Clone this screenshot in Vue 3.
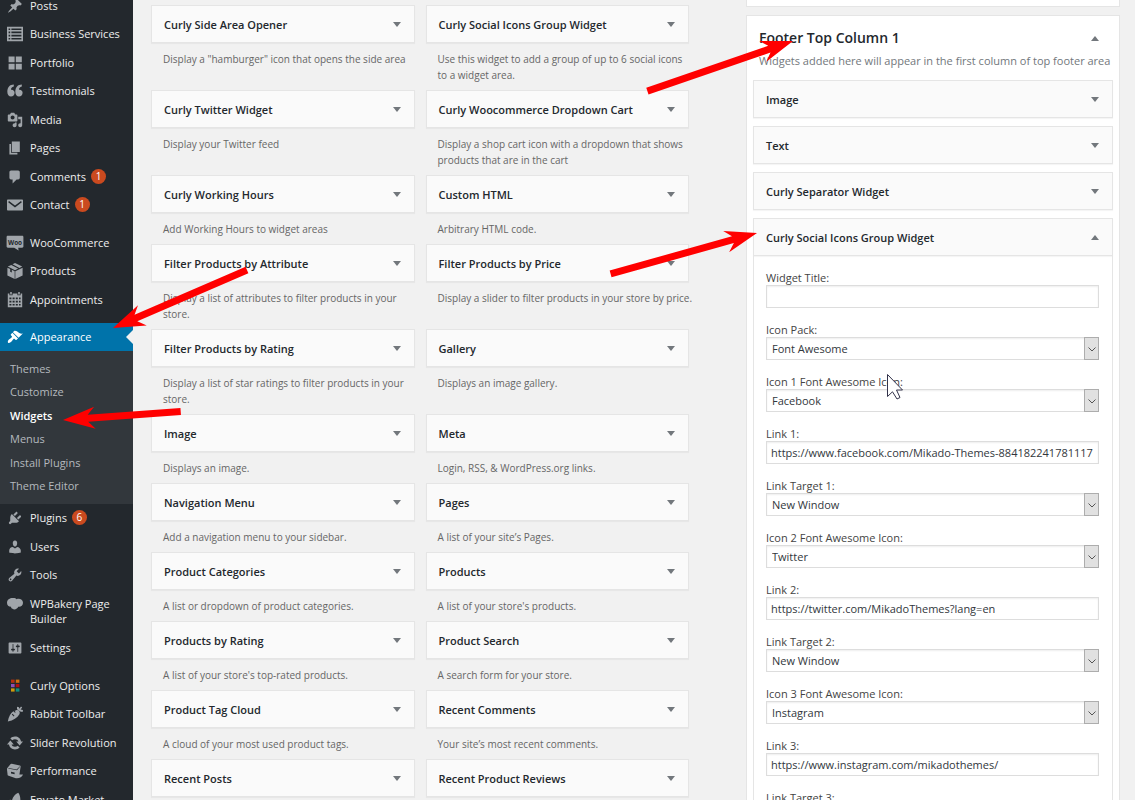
<template>
  <div class="admin-page">
    <nav class="admin-menu" aria-label="Admin menu">
      <ul v-for="(group, gi) in menu" :key="gi" class="menu-group">
        <li v-for="item in group" :key="item.label">
          <a href="#" class="menu-link" :class="{ active: item.active, tall: item.tall }">
            <svg class="menu-icon" viewBox="0 0 20 20" aria-hidden="true">
              <path v-for="(p, i) in icons[item.icon]" :key="i" :d="p.d || p" :fill="p.fill || 'currentColor'" fill-rule="evenodd" />
              <text v-if="item.icon === 'woo'" class="woo-text" x="10" y="12" text-anchor="middle">Woo</text>
            </svg>
            <span class="menu-name">{{ item.label }}</span>
            <span v-if="item.count" class="badge">{{ item.count }}</span>
          </a>
          <ul v-if="item.children" class="submenu">
            <li v-for="child in item.children" :key="child">
              <a href="#" :class="{ current: child === 'Widgets' }">{{ child }}</a>
            </li>
          </ul>
        </li>
      </ul>
    </nav>

    <main class="content">
      <section class="available">
        <article v-for="w in widgets" :key="w.title">
          <button type="button" class="widget-top">
            <span>{{ w.title }}</span>
            <i class="caret"></i>
          </button>
          <p class="widget-desc">{{ w.desc }}</p>
        </article>
      </section>

      <section class="sidebars">
        <div class="sidebar-box previous"></div>
        <div class="sidebar-box">
          <header class="sidebar-head">
            <h2>Footer Top Column 1</h2>
            <button type="button" class="toggle" aria-label="Toggle sidebar"><i class="caret up"></i></button>
          </header>
          <p class="sidebar-desc">Widgets added here will appear in the first column of top footer area</p>

          <div class="placed">
            <button v-for="name in placed" :key="name" type="button" class="widget-top">
              <span>{{ name }}</span>
              <i class="caret"></i>
            </button>

            <div class="open-widget">
              <button type="button" class="widget-top">
                <span>Curly Social Icons Group Widget</span>
                <i class="caret up"></i>
              </button>
              <form class="widget-form" @submit.prevent>
                <div v-for="(f, i) in fields" :key="f.label" class="field">
                  <label :for="'field-' + i">{{ f.label }}</label>
                  <div v-if="f.type === 'select'" class="select-wrap">
                    <select :id="'field-' + i" v-model="f.value">
                      <option>{{ f.value }}</option>
                    </select>
                    <span class="select-arrow">
                      <svg viewBox="0 0 10 10" aria-hidden="true"><path d="M1.5 3.5 5 7l3.5-3.5" /></svg>
                    </span>
                  </div>
                  <input v-else :id="'field-' + i" v-model="f.value" type="text">
                </div>
              </form>
            </div>
          </div>
        </div>
      </section>
    </main>

    <!-- tutorial arrows and mouse pointer over the page -->
    <svg class="annotations" width="1135" height="800" viewBox="0 0 1135 800" aria-hidden="true">
      <path
        v-for="(a, i) in arrows"
        :key="i"
        :d="arrowPath(a.length)"
        :transform="`translate(${a.x} ${a.y}) rotate(${a.angle})`"
        fill="#ff0000"
      />
      <path class="pointer" d="M887.5 374.5v22l5-4.700 4.500 7.200 3-1.500-3.500-7.500h6z" />
    </svg>
  </div>
</template>

<script setup>
import { ref } from 'vue';

const menu = [
  [
    { label: 'Posts', icon: 'post' },
    { label: 'Business Services', icon: 'list' },
    { label: 'Portfolio', icon: 'grid' },
    { label: 'Testimonials', icon: 'quote' },
    { label: 'Media', icon: 'media' },
    { label: 'Pages', icon: 'page' },
    { label: 'Comments', icon: 'comment', count: 1 },
    { label: 'Contact', icon: 'mail', count: 1 },
  ],
  [
    { label: 'WooCommerce', icon: 'woo' },
    { label: 'Products', icon: 'box' },
    { label: 'Appointments', icon: 'calendar' },
  ],
  [
    {
      label: 'Appearance',
      icon: 'brush',
      active: true,
      children: ['Themes', 'Customize', 'Widgets', 'Menus', 'Install Plugins', 'Theme Editor'],
    },
    { label: 'Plugins', icon: 'plug', count: 6 },
    { label: 'Users', icon: 'user' },
    { label: 'Tools', icon: 'wrench' },
    { label: 'WPBakery Page Builder', icon: 'bakery', tall: true },
    { label: 'Settings', icon: 'sliders' },
  ],
  [
    { label: 'Curly Options', icon: 'squares' },
    { label: 'Rabbit Toolbar', icon: 'carrot' },
    { label: 'Slider Revolution', icon: 'refresh' },
    { label: 'Performance', icon: 'cube' },
    { label: 'Envato Market', icon: 'leaf' },
  ],
];

const icons = {
  post: ['M10.44 3.02l1.82-1.82 6.36 6.35-1.83 1.82c-1.05-.68-2.48-.57-3.41.36l-.75.75c-.92.93-1.04 2.35-.35 3.41l-1.83 1.82-2.41-2.41-2.8 2.79c-.42.42-3.38 2.71-3.8 2.29s1.86-3.39 2.28-3.81l2.79-2.79L4.1 9.36l1.83-1.82c1.05.69 2.48.57 3.4-.36l.75-.75c.93-.92 1.05-2.35.36-3.41z'],
  list: ['M0 1h20v18H0zM2 3v2h2V3zM5.500 3v2H18V3zM2 7v2h2V7zM5.500 7v2H18V7zM2 11v2h2v-2zM5.500 11v2H18v-2zM2 15v2h2v-2zM5.500 15v2H18v-2z'],
  grid: ['M2 2h7.500v7H2zM11 2h7.500v7H11zM2 11h7.500v7H2zM11 11h7.500v7H11z'],
  quote: ['M8.500 2v2.500C6 5 5 6.500 5 8.500c2.500-.5 4.500 1.300 4.500 3.800S7.600 17 5 17s-4.600-2-4.600-6C.4 5.500 3.500 2 8.500 2zM18.500 2v2.500C16 5 15 6.500 15 8.500c2.500-.5 4.500 1.300 4.500 3.800S17.600 17 15 17s-4.600-2-4.600-6c0-5.500 3.100-9 8.100-9z'],
  media: ['M13 11V4c0-.55-.45-1-1-1h-1.670L9 1H5L3.670 3H2c-.55 0-1 .45-1 1v7c0 .55.45 1 1 1h10c.55 0 1-.45 1-1zM7 4.500c1.380 0 2.500 1.120 2.500 2.500S8.380 9.500 7 9.500 4.500 8.380 4.500 7 5.620 4.500 7 4.500zM14 6h5v10.500c0 1.380-1.120 2.500-2.500 2.500S14 17.880 14 16.500s1.120-2.500 2.500-2.500c.17 0 .34.02.5.05V9h-3V6zm-4 8.050V13h2v3.500c0 1.380-1.120 2.500-2.500 2.500S7 17.880 7 16.500 8.120 14 9.500 14c.17 0 .34.02.5.05z'],
  page: ['M6 15V2h10v13H6zm-1 1h8v2H3V5h2v11z'],
  comment: ['M5 2h9c1.100 0 2 .9 2 2v7c0 1.100-.9 2-2 2h-2l-5 5v-5H5c-1.100 0-2-.9-2-2V4c0-1.100.9-2 2-2z'],
  mail: ['M1 3h18c.6 0 1 .4 1 1v12c0 .6-.4 1-1 1H1c-.6 0-1-.4-1-1V4c0-.6.4-1 1-1zm1.500 2L1.500 6.500 10 13l8.500-6.500-1-1.500L10 10.600z'],
  woo: ['M1 1h18c.8 0 1.500.7 1.500 1.500v12c0 .8-.7 1.500-1.500 1.500h-5l.5 3.500L9 16H1c-.8 0-1.500-.7-1.500-1.500v-12C-.5 1.700.2 1 1 1z'],
  box: ['M10 0l9 4.500-3.500 1.700-8.600-4.500zM5.300 2.500l8.600 4.500L10 9 1 4.500zM.5 5.800L4 7.500v3.500l2 1V8.500L9.600 10.200V20L.5 15.500zM19.500 5.800V15.500L10.400 20V10.200z'],
  calendar: ['M4 0h2v3H4zM14 0h2v3h-2zM1 2h2v2h4V2h6v2h4V2h2v17H1zM3 7v2h2.500V7zM7 7v2h2.500V7zM11 7v2h2.500V7zM15 7v2h2V7zM3 11v2h2.500v-2zM7 11v2h2.500v-2zM11 11v2h2.500v-2zM15 11v2h2v-2zM3 15v2h2.500v-2zM7 15v2h2.500v-2zM11 15v2h2.500v-2zM15 15v2h2v-2z'],
  brush: ['M14.480 11.060L7.410 3.990l1.500-1.500c.5-.56 2.300-.47 3.510.32 1.210.8 1.430 1.280 2.910 2.100 1.180.64 2.450 1.260 4.450.85zm-.71.71L6.700 4.700 4.930 6.470c-.39.39-.39 1.020 0 1.410l1.060 1.060c.39.39.39 1.030 0 1.420-.6.6-1.430 1.110-2.210 1.690-.35.26-.7.53-1.010.84C1.430 14.230.4 16.080 1.400 17.070c.99 1 2.840-.03 4.180-1.360.31-.31.58-.66.85-1.020.57-.78 1.080-1.610 1.690-2.210.39-.39 1.020-.39 1.410 0l1.060 1.060c.39.39 1.020.39 1.410 0z'],
  plug: ['M13.110 4.360L9.870 7.600 8 5.730l3.240-3.240c.35-.34 1.050-.2 1.560.32.52.51.66 1.210.31 1.550zm-8 1.770l.91-1.120 9.010 9.010-1.190.84c-.71.71-2.630 1.160-3.820 1.160H6.140L4.900 17.260c-.59.59-1.540.59-2.120 0-.59-.58-.59-1.530 0-2.120l1.240-1.240v-3.880c0-1.130.4-3.190 1.090-3.890zm7.260 3.970l3.240-3.240c.34-.35 1.040-.21 1.550.31.52.51.66 1.210.31 1.550l-3.240 3.250z'],
  user: ['M10 9.250c-2.270 0-2.730-3.440-2.730-3.440C7 4.020 7.820 2 9.970 2c2.160 0 2.980 2.020 2.710 3.810 0 0-.41 3.440-2.680 3.440zm0 2.570L12.720 10c2.390 0 4.520 2.330 4.520 4.530v2.490s-3.650 1.130-7.240 1.130c-3.650 0-7.240-1.130-7.240-1.130v-2.490c0-2.250 1.940-4.480 4.470-4.480z'],
  wrench: ['M16.680 9.770c-1.340 1.340-3.300 1.670-4.950.99l-5.410 6.520c-.99.99-2.590.99-3.580 0s-.99-2.590 0-3.570l6.520-5.420c-.68-1.650-.35-3.610.99-4.950 1.280-1.280 3.120-1.620 4.720-1.060l-2.890 2.890 2.820 2.820 2.860-2.870c.53 1.580.18 3.390-1.080 4.650zM3.810 16.210c.4.39 1.040.39 1.430 0 .4-.4.4-1.040 0-1.430-.39-.4-1.030-.4-1.430 0-.39.39-.39 1.030 0 1.430z'],
  bakery: ['M7 2.500c2-.4 4 .3 5 1.500 3-1.500 8 0 8 4.500 0 4-3 5.500-6 5-.5 2.500-5 4.500-7 2.500-1.500-.5-2-1.500-2-2.500C2 13.500 0 11.500 0 8.500c0-4 3.500-6 7-6z'],
  sliders: ['M18 16V4c0-.55-.45-1-1-1H3c-.55 0-1 .45-1 1v12c0 .55.45 1 1 1h14c.55 0 1-.45 1-1zM8 11h1c.55 0 1 .45 1 1s-.45 1-1 1H8v1.500c0 .28-.22.5-.5.5s-.5-.22-.5-.5V13H6c-.55 0-1-.45-1-1s.45-1 1-1h1V5.500c0-.28.22-.5.5-.5s.5.22.5.5V11zm5-2h-1c-.55 0-1-.45-1-1s.45-1 1-1h1V5.500c0-.28.22-.5.5-.5s.5.22.5.5V7h1c.55 0 1 .45 1 1s-.45 1-1 1h-1v5.500c0 .28-.22.5-.5.5s-.5-.22-.5-.5V9z'],
  squares: [
    { d: 'M5 2h4.500v4H5z', fill: '#b5300f' },
    { d: 'M11 2h4.500v4H11z', fill: '#d2700c' },
    { d: 'M5 7.500h4.500v4H5z', fill: '#8e4fb5' },
    { d: 'M11 7.500h4.500v4H11z', fill: '#b01010' },
    { d: 'M5 13h4.500v4H5z', fill: '#cf9a0b' },
    { d: 'M11 13h4.500v4H11z', fill: '#118f80' },
  ],
  carrot: ['M11 5.500c1.500-.8 3-.5 4 .7 1 1 1.300 2.500.5 4C13 14.500 8 18 1 19.500 2 13 5 8.500 8 6.500l2 2 .8-.8-1.300-1.700zM12.500 4V1l2.500.5.5 2L17.500.5 19 2l-2 2.500 3 .5-.5 2.500L16.500 7zM6 10.500l2.500 2.500.8-.8L7 9.700z'],
  refresh: ['M10 2c4 0 7 2.600 7.500 6H20l-4.200 5-4.300-5h2.800c-.6-1.700-2.300-2.800-4.300-2.800-1.300 0-2.500.5-3.400 1.300L4.200 4.400C5.700 2.900 7.700 2 10 2zM10 18c-4 0-7-2.600-7.500-6H0l4.200-5 4.300 5H5.700c.6 1.700 2.300 2.800 4.300 2.800 1.300 0 2.500-.5 3.400-1.300l2.400 2.100C14.300 17.100 12.300 18 10 18z'],
  cube: ['M6 1l10 2c1 .2 1.300 1 1 2l-1.500 9.500c1.200-.3 2.500 0 4.500 0-1 3.500-5 5-9 4.500L2 16c-1-.3-1.500-1-1.300-2L0 8.500C0 7 0 6.500 1 5.500L4 2c.6-.8 1-1.100 2-1zM1.500 7l11 2 4-4.500-.3-.4L12 8 2 6.200zM5 11v2l4.500 1v-2z'],
  leaf: ['M14 1c3 3 4 12 .5 16C12 20 6 20 3.500 16.500 2 14 2.500 11 4 9c.5 2 1 3 2 4 0-5 3-10 8-12z'],
};

const widgets = [
  { title: 'Curly Side Area Opener', desc: 'Display a "hamburger" icon that opens the side area' },
  { title: 'Curly Social Icons Group Widget', desc: 'Use this widget to add a group of up to 6 social icons to a widget area.' },
  { title: 'Curly Twitter Widget', desc: 'Display your Twitter feed' },
  { title: 'Curly Woocommerce Dropdown Cart', desc: 'Display a shop cart icon with a dropdown that shows products that are in the cart' },
  { title: 'Curly Working Hours', desc: 'Add Working Hours to widget areas' },
  { title: 'Custom HTML', desc: 'Arbitrary HTML code.' },
  { title: 'Filter Products by Attribute', desc: 'Display a list of attributes to filter products in your store.' },
  { title: 'Filter Products by Price', desc: 'Display a slider to filter products in your store by price.' },
  { title: 'Filter Products by Rating', desc: 'Display a list of star ratings to filter products in your store.' },
  { title: 'Gallery', desc: 'Displays an image gallery.' },
  { title: 'Image', desc: 'Displays an image.' },
  { title: 'Meta', desc: 'Login, RSS, & WordPress.org links.' },
  { title: 'Navigation Menu', desc: 'Add a navigation menu to your sidebar.' },
  { title: 'Pages', desc: 'A list of your site’s Pages.' },
  { title: 'Product Categories', desc: 'A list or dropdown of product categories.' },
  { title: 'Products', desc: "A list of your store's products." },
  { title: 'Products by Rating', desc: "A list of your store's top-rated products." },
  { title: 'Product Search', desc: 'A search form for your store.' },
  { title: 'Product Tag Cloud', desc: 'A cloud of your most used product tags.' },
  { title: 'Recent Comments', desc: 'Your site’s most recent comments.' },
  { title: 'Recent Posts', desc: 'Your site’s most recent Posts.' },
  { title: 'Recent Product Reviews', desc: 'Display a list of recent reviews from your store.' },
];

const placed = ['Image', 'Text', 'Curly Separator Widget'];

const fields = ref([
  { label: 'Widget Title:', type: 'text', value: '' },
  { label: 'Icon Pack:', type: 'select', value: 'Font Awesome' },
  { label: 'Icon 1 Font Awesome Icon:', type: 'select', value: 'Facebook' },
  { label: 'Link 1:', type: 'text', value: 'https://www.facebook.com/Mikado-Themes-884182241781117' },
  { label: 'Link Target 1:', type: 'select', value: 'New Window' },
  { label: 'Icon 2 Font Awesome Icon:', type: 'select', value: 'Twitter' },
  { label: 'Link 2:', type: 'text', value: 'https://twitter.com/MikadoThemes?lang=en' },
  { label: 'Link Target 2:', type: 'select', value: 'New Window' },
  { label: 'Icon 3 Font Awesome Icon:', type: 'select', value: 'Instagram' },
  { label: 'Link 3:', type: 'text', value: 'https://www.instagram.com/mikadothemes/' },
  { label: 'Link Target 3:', type: 'select', value: 'New Window' },
]);

// x / y is the tip of the arrow
const arrows = [
  { x: 793, y: 41, angle: -19, length: 154 },
  { x: 757, y: 233, angle: -15.6, length: 152 },
  { x: 113, y: 328, angle: 156.6, length: 146 },
  { x: 63, y: 420, angle: 175.9, length: 118 },
];

const arrowPath = (length) =>
  `M0 0L-32 -11L-25 -3.500H-${length}V3.500H-25L-32 11Z`;
</script>

<style>
body {
  background: #f1f1f1;
}
</style>

<style scoped>
.admin-page {
  position: relative;
  display: flex;
  height: 100vh;
  overflow: hidden;
  background: #f1f1f1;
  color: #444;
  font-family: "Open Sans", "Noto Sans", sans-serif;
  font-size: 11px;
}

ul {
  list-style: none;
  margin: 0;
  padding: 0;
}

h2,
p {
  margin: 0;
}

button,
input,
select {
  font-family: inherit;
  box-sizing: border-box;
}

/* left menu */
.admin-menu {
  flex: 0 0 133px;
  margin-top: -8px;
  background: #23282d;
}

.menu-group {
  display: grid;
  grid-auto-rows: minmax(28px, auto) minmax(29px, auto);
  margin-bottom: 9px;
}

.menu-link {
  position: relative;
  display: flex;
  align-items: flex-start;
  padding: 6px 0 6px 7px;
  color: #eee;
  font-size: 11px;
  line-height: 15px;
  text-decoration: none;
}

.menu-link.tall {
  padding-bottom: 8px;
}

.menu-icon {
  flex: none;
  width: 16px;
  height: 16px;
  margin-right: 7px;
  overflow: visible;
  color: #a0a5aa;
}

.woo-text {
  fill: #23282d;
  font-size: 8px;
  font-weight: 700;
}

.badge {
  width: 15px;
  height: 15px;
  margin-left: 5px;
  border-radius: 50%;
  background: #ca4a1f;
  color: #fff;
  font-size: 10px;
  text-align: center;
}

.menu-link.active {
  background: #0073aa;
  color: #fff;
}

.active .menu-icon {
  color: #fff;
}

.menu-link.active::after {
  content: "";
  position: absolute;
  top: 7px;
  right: 0;
  border: 7px solid transparent;
  border-left: 0;
  border-right-color: #f1f1f1;
}

.submenu {
  display: grid;
  grid-auto-rows: 23px 24px;
  padding: 6px 0;
  background: #32373c;
}

.submenu a {
  display: block;
  padding-left: 10px;
  color: #b4b9be;
  font-size: 11px;
  line-height: 23px;
  text-decoration: none;
}

.submenu .current {
  color: #fff;
  font-weight: 600;
}

/* widgets */
.content {
  flex: 1;
  display: flex;
  align-items: flex-start;
  gap: 57px;
  min-width: 0;
  padding: 0 15px 0 18px;
}

.available {
  flex: 538;
  display: grid;
  grid-template-columns: 1fr 1fr;
  column-gap: 11px;
  min-width: 0;
  padding-top: 5px;
}

.widget-top {
  display: flex;
  align-items: center;
  justify-content: space-between;
  width: 100%;
  height: 38px;
  padding: 0 13px 0 12px;
  border: 1px solid #e5e5e5;
  background: #fafafa;
  box-shadow: 0 1px 1px rgba(0, 0, 0, 0.04);
  color: #23282d;
  font-size: 11px;
  font-weight: 600;
  text-align: left;
}

.caret {
  border: 4px solid transparent;
  border-top: 5px solid #72777c;
  border-bottom: 0;
}

.caret.up {
  border-top: 0;
  border-bottom: 5px solid #72777c;
}

.widget-desc {
  margin-right: -4px;
  padding: 8px 0 7px 12px;
  color: #666;
  font-size: 10px;
  line-height: 16px;
}

.sidebars {
  flex: 374;
  min-width: 0;
}

.sidebar-box {
  padding: 0 6px;
  border: 1px solid #e5e5e5;
  background: #fff;
}

.sidebar-box.previous {
  height: 6px;
  margin-bottom: 8px;
  border-top: 0;
}

.sidebar-head {
  display: flex;
  align-items: center;
  justify-content: space-between;
  padding: 10px 14px 0 6px;
}

.sidebar-head h2 {
  color: #23282d;
  font-size: 14px;
  font-weight: 600;
  line-height: 24px;
}

.toggle {
  padding: 0;
  border: 0;
  background: none;
}

.toggle .caret {
  display: block;
}

.sidebar-desc {
  padding: 2px 6px 10px;
  color: #72777c;
  font-size: 11px;
  line-height: 18px;
  white-space: nowrap;
}

.placed {
  display: flex;
  flex-direction: column;
  gap: 8px;
}

.widget-form {
  padding: 14px 13px 14px 12px;
  border: 1px solid #e5e5e5;
  border-top: 0;
}

.field {
  display: flex;
  flex-direction: column;
  margin-bottom: 14px;
}

.field label {
  font-size: 11px;
  line-height: 15px;
}

.field input,
.field select {
  width: 100%;
  height: 23px;
  padding: 0 4px;
  border: 1px solid #ddd;
  border-radius: 0;
  background: #fff;
  box-shadow: inset 0 1px 2px rgba(0, 0, 0, 0.07);
  color: #32373c;
  font-size: 11px;
}

.select-wrap {
  display: grid;
}

.field select,
.select-arrow {
  grid-area: 1 / 1;
}

.field select {
  appearance: none;
  padding-left: 5px;
}

.select-arrow {
  display: grid;
  place-items: center;
  justify-self: end;
  width: 15px;
  box-sizing: border-box;
  border: 1px solid #adadad;
  background: #e1e1e1;
  pointer-events: none;
}

.select-arrow svg {
  width: 10px;
  height: 10px;
  fill: none;
  stroke: #555;
}

.annotations {
  position: absolute;
  top: 0;
  left: 0;
  pointer-events: none;
}

.pointer {
  fill: #fff;
  stroke: #32324a;
}
</style>
